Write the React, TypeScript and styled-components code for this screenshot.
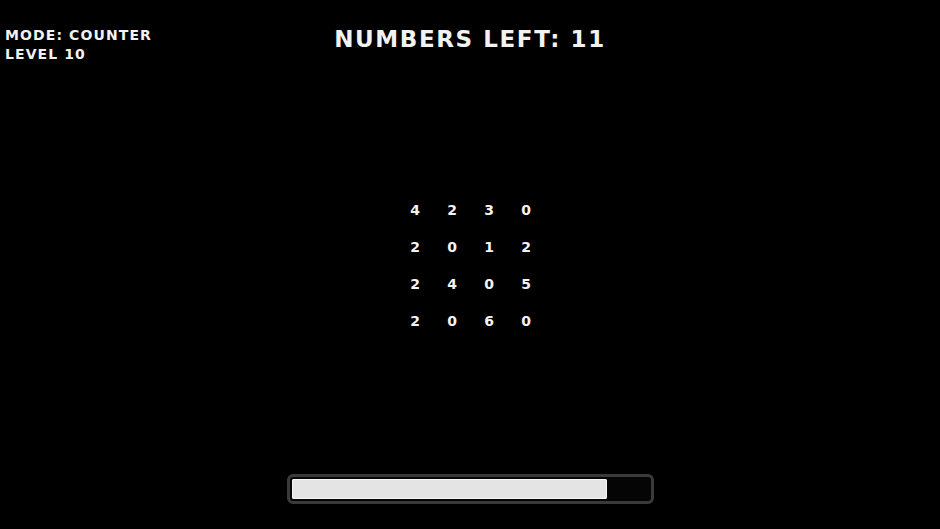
import React, { FC } from "react";
import styled, { createGlobalStyle } from "styled-components";

const GlobalStyle = createGlobalStyle`
  html, body {
    margin: 0;
    padding: 0;
    background: #000;
  }

  body {
    font-family: "DejaVu Sans", "Liberation Sans", sans-serif;
    color: #f2f2f2;
  }
`;

const Screen = styled.main`
  display: grid;
  grid-template: 1fr / 1fr;
  height: 529px;
  width: 940px;
  overflow: hidden;
  background: #000;

  > * {
    grid-area: 1 / 1;
  }
`;

const Hud = styled.header`
  align-self: start;
  display: grid;
  grid-template-columns: 1fr auto 1fr;
  padding: 0 5px;
`;

const Status = styled.div`
  display: flex;
  flex-direction: column;
  gap: 5px;
  padding-top: 28px;
`;

const StatusLine = styled.span`
  font-size: 14px;
  font-weight: bold;
  letter-spacing: 1.1px;
  line-height: 14px;
  white-space: nowrap;
`;

const Title = styled.h1`
  margin: 0;
  padding-top: 28px;
  font-size: 23px;
  font-weight: bold;
  letter-spacing: 1.6px;
  line-height: 23px;
  white-space: nowrap;
`;

const Board = styled.div`
  align-self: center;
  justify-self: center;
  display: grid;
  grid-template-columns: repeat(4, 37px);
  grid-auto-rows: 37px;
  margin: 2px 0 0 1px;
`;

const Cell = styled.span`
  display: flex;
  align-items: center;
  justify-content: center;
  font-size: 14px;
  font-weight: bold;
  color: #f4f4f4;
`;

const Timer = styled.div`
  align-self: end;
  justify-self: center;
  box-sizing: border-box;
  width: 367px;
  height: 30px;
  margin-bottom: 25px;
  padding: 2px;
  border: 3px solid #3a3a3a;
  border-radius: 6px;
  background: #050505;
`;

const TimerFill = styled.div`
  height: 100%;
  border-radius: 2px;
  background: #e4e4e4;
  box-shadow: inset 0 0 0 1px #f6f6f6;
`;

const board = [
  [4, 2, 3, 0],
  [2, 0, 1, 2],
  [2, 4, 0, 5],
  [2, 0, 6, 0],
];

const timeLeft = 0.885;

const App: FC = () => (
  <>
    <GlobalStyle />
    <Screen>
      <Hud>
        <Status>
          <StatusLine>MODE: COUNTER</StatusLine>
          <StatusLine>LEVEL 10</StatusLine>
        </Status>
        <Title>NUMBERS LEFT: 11</Title>
        <div />
      </Hud>
      <Board>
        {board.flat().map((n, i) => (
          <Cell key={i}>{n}</Cell>
        ))}
      </Board>
      <Timer>
        <TimerFill style={{ width: `${timeLeft * 100}%` }} />
      </Timer>
    </Screen>
  </>
);

export default App;
